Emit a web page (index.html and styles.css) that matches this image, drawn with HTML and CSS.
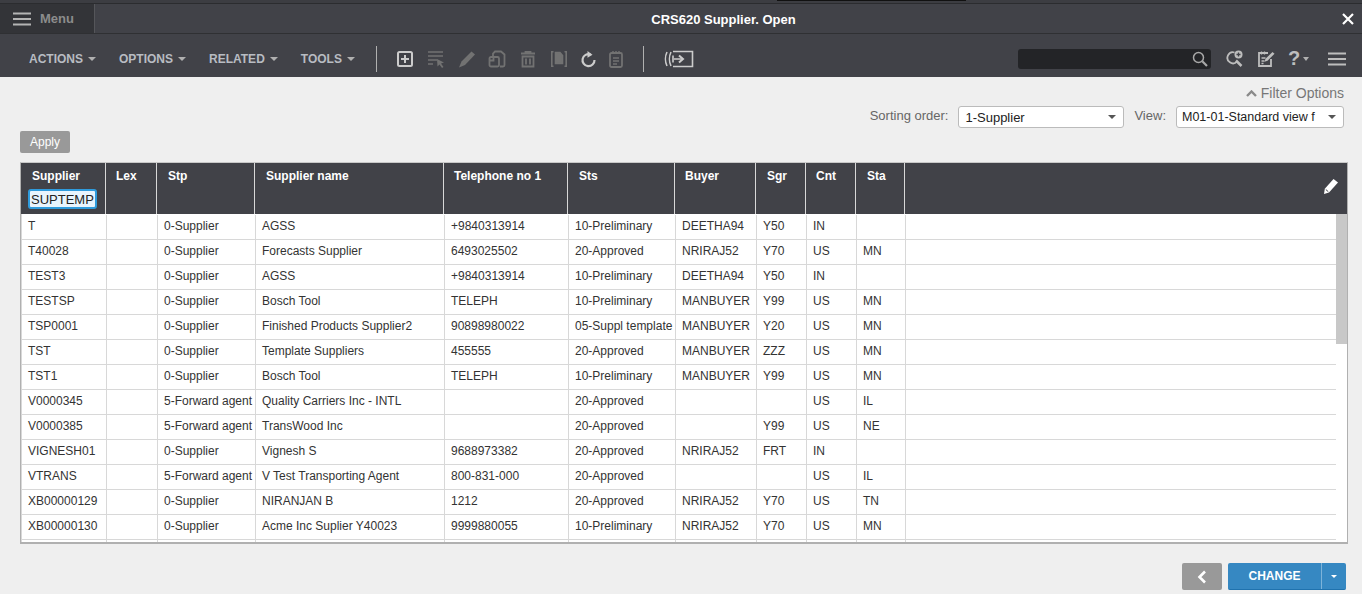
FILE: index.html
```html
<!doctype html>
<html lang="en">
    <head>
        <meta charset="UTF-8" />
        <title>CRS620 Supplier. Open</title>
        <link rel="stylesheet" href="styles.css">
    </head>
    <body>
        <div class="top-strip"><div class="top-mark"></div></div>
        <div class="title-bar">
            <div class="menu-button">
                <svg class="menu-icon" width="18" height="14" viewBox="0 0 18 14"><path d="M0 1.500h18M0 7h18M0 12.500h18" stroke="#b4b4b4" stroke-width="2"/></svg>
                <span>Menu</span>
            </div>
            <div class="title">CRS620 Supplier. Open</div>
            <svg class="close-icon" width="12" height="12" viewBox="0 0 12 12"><path d="M1 1l10 10M11 1L1 11" stroke="#fff" stroke-width="2.200"/></svg>
        </div>

        <div class="toolbar">
            <div class="nav-item">ACTIONS<i class="caret"></i></div>
            <div class="nav-item">OPTIONS<i class="caret"></i></div>
            <div class="nav-item">RELATED<i class="caret"></i></div>
            <div class="nav-item">TOOLS<i class="caret"></i></div>
            <div class="tool-sep"></div>
            <div class="tools">
                <svg width="20" height="20" viewBox="0 0 20 20" fill="none" stroke="#ccc"><rect x="3" y="3" width="14" height="14" rx="1.500" stroke-width="2"/><path d="M6 10h8M10 6v8" stroke-width="2"/></svg>
                <svg width="20" height="20" viewBox="0 0 20 20" fill="none" stroke="#727272"><path d="M2 3h15M2 7h15M2 11h9M2 15h5" stroke-width="1.600"/><path d="M11 10l7 3.500-3 1 2.500 3.500-1.500 1-2.500-3.500-2 2z" fill="#727272" stroke="none"/></svg>
                <svg width="20" height="20" viewBox="0 0 20 20"><path d="M14.500 2.500l3.500 3L8 16l-6 2.500L4.500 12.500z" fill="#727272"/></svg>
                <svg width="20" height="20" viewBox="0 0 20 20" fill="none" stroke="#727272" stroke-width="1.800"><path d="M6 7V4.500L8 2.500h6l3.500 3v10.500c0 1-.5 1.500-1.500 1.500H13"/><rect x="2.500" y="8" width="9.500" height="9.500" rx="1.500"/><path d="M2.500 11.500h4V8"/></svg>
                <svg width="20" height="20" viewBox="0 0 20 20" fill="none" stroke="#727272" stroke-width="1.800"><path d="M3 4.500h14M7.500 4.500V3h5v1.500M4.500 7.500h11v10h-11zM8 9.500v6M12 9.500v6"/></svg>
                <svg width="20" height="20" viewBox="0 0 20 20" fill="none" stroke="#727272" stroke-width="1.600"><path d="M4.500 2.800H2.800v14.400h1.700M15.500 2.800h1.700v14.400h-1.700"/><path d="M6.500 3.500h4.500l2.500 3v8h-7z" fill="#727272"/></svg>
                <svg class="tool-near" width="20" height="20" viewBox="0 0 20 20" fill="none"><path d="M12.500 5.500A6 6 0 1 0 16.500 11" stroke="#ccc" stroke-width="2.200"/><path d="M9.500 2l5 3.800-5 3z" fill="#ccc"/></svg>
                <svg class="tool-nearer" width="20" height="20" viewBox="0 0 20 20" fill="none" stroke="#727272"><rect x="4" y="4" width="12" height="14" rx="1.500" stroke-width="1.800"/><path d="M7 2v3M10 2v3M13 2v3M7 9h6M7 12h6M7 15h4" stroke-width="1.400"/></svg>
            </div>
            <div class="tool-sep tool-sep-second"></div>
            <svg class="switch-icon" width="30" height="18" viewBox="0 0 30 18" fill="none" stroke="#ccc" stroke-width="1.600"><path d="M3 2C1 6 1 12 3 16M7 2C5 6 5 12 7 16"/><path d="M9 1.500h19.500v15H9"/><path d="M9 5.500v7M10 9h8"/><path d="M15 5.500l4 3.500-4 3.500" stroke-width="2"/></svg>

            <div class="search-box">
                <svg width="16" height="16" viewBox="0 0 16 16" fill="none" stroke="#a8a8a8"><circle cx="6.500" cy="6.500" r="5" stroke-width="1.500"/><path d="M10.300 10.300L15 15" stroke-width="2.200"/></svg>
            </div>
            <div class="right-tools">
                <svg width="18" height="18" viewBox="0 0 18 18" fill="none"><path d="M8.500 2.500A5.500 5.500 0 1 0 11 11.500" stroke="#bdbdbd" stroke-width="1.800"/><path d="M10 10.500l5.500 5.500" stroke="#bdbdbd" stroke-width="2.500"/><circle cx="12.500" cy="4.500" r="4" fill="#bdbdbd"/><path d="M12.500 2.500v4M10.500 4.500h4" stroke="#414248" stroke-width="1.300"/></svg>
                <svg width="18" height="18" viewBox="0 0 18 18" fill="none" stroke="#bdbdbd"><path d="M14 9v7H2V3h9" stroke-width="1.800"/><path d="M4.500 1.500v3M7.500 1.500v3M4.500 8h4M4.500 11h3M4.500 13.500h2" stroke-width="1.300"/><path d="M15.500 2l2 1.800-7 7-3 1 1-3z" fill="#bdbdbd" stroke="none"/></svg>
                <span class="help">?<i class="caret"></i></span>
                <svg width="18" height="14" viewBox="0 0 18 14"><path d="M0 1.500h18M0 7h18M0 12.500h18" stroke="#bdbdbd" stroke-width="2"/></svg>
            </div>
        </div>

        <div class="filter-toggle">
            <svg width="11" height="7" viewBox="0 0 11 7"><path d="M1 6l4.500-4.500L10 6" fill="none" stroke="#8a8a8a" stroke-width="2.400"/></svg>
            <span>Filter Options</span>
        </div>

        <div class="filter-row">
            <label>Sorting order:</label>
            <div class="select select-sort">1-Supplier<i class="select-arrow"></i></div>
            <label class="view-label">View:</label>
            <div class="select select-view">M01-01-Standard view f<i class="select-arrow"></i></div>
        </div>

        <div class="apply-row"><button class="apply" type="button">Apply</button></div>

        <div class="grid">
            <table class="grid-head">
                <colgroup>
                    <col class="c1"><col class="c2"><col class="c3"><col class="c4"><col class="c5"><col class="c6"><col class="c7"><col class="c8"><col class="c9"><col class="c10"><col>
                </colgroup>
                <tr>
                    <th>Supplier<input class="filter-input" type="text" value="SUPTEMP"></th>
                    <th class="nudge">Lex</th>
                    <th>Stp</th>
                    <th>Supplier name</th>
                    <th class="nudge">Telephone no 1</th>
                    <th>Sts</th>
                    <th class="nudge">Buyer</th>
                    <th>Sgr</th>
                    <th class="nudge">Cnt</th>
                    <th>Sta</th>
                    <th class="edit-head">
                        <svg width="17" height="17" viewBox="0 0 17 17"><path d="M11.500 1l4.500 3.500-9 10-5 1.500 .8-5.200z" fill="#fff"/><path d="M3.800 11.500l2.500 2.200" stroke="#414248" stroke-width="1"/></svg>
                    </th>
                </tr>
            </table>
            <div class="grid-body">
                <table class="grid-rows">
                    <colgroup>
                        <col class="c1"><col class="c2"><col class="c3"><col class="c4"><col class="c5"><col class="c6"><col class="c7"><col class="c8"><col class="c9"><col class="c10"><col>
                    </colgroup>
                    <tr><td>T</td><td></td><td>0-Supplier</td><td>AGSS</td><td>+9840313914</td><td>10-Preliminary</td><td>DEETHA94</td><td>Y50</td><td>IN</td><td></td><td></td></tr>
                    <tr><td>T40028</td><td></td><td>0-Supplier</td><td>Forecasts Supplier</td><td>6493025502</td><td>20-Approved</td><td>NRIRAJ52</td><td>Y70</td><td>US</td><td>MN</td><td></td></tr>
                    <tr><td>TEST3</td><td></td><td>0-Supplier</td><td>AGSS</td><td>+9840313914</td><td>10-Preliminary</td><td>DEETHA94</td><td>Y50</td><td>IN</td><td></td><td></td></tr>
                    <tr><td>TESTSP</td><td></td><td>0-Supplier</td><td>Bosch Tool</td><td>TELEPH</td><td>10-Preliminary</td><td>MANBUYER</td><td>Y99</td><td>US</td><td>MN</td><td></td></tr>
                    <tr><td>TSP0001</td><td></td><td>0-Supplier</td><td>Finished Products Supplier2</td><td>90898980022</td><td>05-Suppl template</td><td>MANBUYER</td><td>Y20</td><td>US</td><td>MN</td><td></td></tr>
                    <tr><td>TST</td><td></td><td>0-Supplier</td><td>Template Suppliers</td><td>455555</td><td>20-Approved</td><td>MANBUYER</td><td>ZZZ</td><td>US</td><td>MN</td><td></td></tr>
                    <tr><td>TST1</td><td></td><td>0-Supplier</td><td>Bosch Tool</td><td>TELEPH</td><td>10-Preliminary</td><td>MANBUYER</td><td>Y99</td><td>US</td><td>MN</td><td></td></tr>
                    <tr><td>V0000345</td><td></td><td>5-Forward agent</td><td>Quality Carriers Inc - INTL</td><td></td><td>20-Approved</td><td></td><td></td><td>US</td><td>IL</td><td></td></tr>
                    <tr><td>V0000385</td><td></td><td>5-Forward agent</td><td>TransWood Inc</td><td></td><td>20-Approved</td><td></td><td>Y99</td><td>US</td><td>NE</td><td></td></tr>
                    <tr><td>VIGNESH01</td><td></td><td>0-Supplier</td><td>Vignesh S</td><td>9688973382</td><td>20-Approved</td><td>NRIRAJ52</td><td>FRT</td><td>IN</td><td></td><td></td></tr>
                    <tr><td>VTRANS</td><td></td><td>5-Forward agent</td><td>V Test Transporting Agent</td><td>800-831-000</td><td>20-Approved</td><td></td><td></td><td>US</td><td>IL</td><td></td></tr>
                    <tr><td>XB00000129</td><td></td><td>0-Supplier</td><td>NIRANJAN B</td><td>1212</td><td>20-Approved</td><td>NRIRAJ52</td><td>Y70</td><td>US</td><td>TN</td><td></td></tr>
                    <tr><td>XB00000130</td><td></td><td>0-Supplier</td><td>Acme Inc Suplier Y40023</td><td>9999880055</td><td>10-Preliminary</td><td>NRIRAJ52</td><td>Y70</td><td>US</td><td>MN</td><td></td></tr>
                    <tr><td></td><td></td><td></td><td></td><td></td><td></td><td></td><td></td><td></td><td></td><td></td></tr>
                </table>
                <div class="scroll-thumb"></div>
            </div>
        </div>

        <div class="footer">
            <button class="back" type="button">
                <svg width="10" height="14" viewBox="0 0 10 14"><path d="M8 1.500L2.500 7 8 12.500" fill="none" stroke="#fff" stroke-width="2.600"/></svg>
            </button>
            <div class="change">
                <span class="change-label">CHANGE</span>
                <span class="change-more"><i class="caret caret-white"></i></span>
            </div>
        </div>
    </body>
</html>
```

FILE: styles.css
```css
* {
    box-sizing: border-box;
}
html, body {
    margin: 0;
    height: 594px;
    overflow: hidden;
}
body {
    font-family: "Liberation Sans", Arial, sans-serif;
    font-size: 12px;
    color: #333;
    background-color: #efefef;
}

/* top bars */
.top-strip {
    height: 4px;
    background-color: #3c3d42;
    border-bottom: 1px solid #2b2c2f;
}
.top-mark {
    width: 189px;
    height: 1px;
    margin-left: 777px;
    background-color: #111;
}
.title-bar {
    display: flex;
    align-items: center;
    height: 30px;
    background-color: #414248;
    border-bottom: 1px solid #2f3033;
}
.menu-button {
    display: flex;
    align-items: center;
    gap: 9px;
    width: 95px;
    height: 29px;
    padding-left: 13px;
    font-size: 13px;
    font-weight: bold;
    color: #8c8c8c;
    background-color: #333438;
    border-right: 1px solid #55565a;
}
.title {
    flex: 1;
    padding-top: 1px;
    padding-left: 10px;
    text-align: center;
    font-size: 13px;
    font-weight: bold;
    color: #fff;
}
.close-icon {
    margin-top: 1px;
    margin-right: 8px;
}
.toolbar {
    display: flex;
    align-items: center;
    height: 43px;
    padding-top: 6px;
    padding-left: 29px;
    background-color: #414248;
}
.nav-item {
    display: flex;
    align-items: center;
    margin-right: 23px;
    font-size: 12px;
    font-weight: bold;
    color: #b8bcc2;
}
.caret {
    display: inline-block;
    width: 0;
    height: 0;
    margin-left: 5px;
    border-left: 4px solid transparent;
    border-right: 4px solid transparent;
    border-top: 4px solid #b0b0b0;
}
.tool-sep {
    width: 1px;
    height: 26px;
    margin-left: -2px;
    background-color: #b0b0b0;
}
.tool-sep-second {
    margin-left: 17px;
}
.tools {
    display: flex;
    gap: 10.800px;
    margin-left: 18px;
}
.tool-near {
    margin-left: -2px;
}
.tool-nearer {
    margin-left: -3px;
}
.switch-icon {
    margin-left: 20px;
}
.search-box {
    display: flex;
    align-items: center;
    justify-content: flex-end;
    width: 193px;
    height: 20px;
    margin-left: auto;
    padding-right: 3px;
    background-color: #232427;
    border-radius: 3px;
}
.right-tools {
    display: flex;
    align-items: center;
    width: 151px;
    padding-left: 15px;
    gap: 13px;
}
.help {
    display: flex;
    align-items: center;
    width: 27px;
    font-size: 20px;
    font-weight: bold;
    color: #bdbdbd;
}
.help .caret {
    margin-left: 3px;
    border-left-width: 3.500px;
    border-right-width: 3.500px;
}

/* filter area */
.filter-toggle {
    display: flex;
    align-items: center;
    justify-content: flex-end;
    gap: 4px;
    height: 16px;
    margin-top: 8px;
    padding-right: 18px;
    font-size: 14px;
    color: #777;
}
.filter-row {
    display: flex;
    align-items: center;
    justify-content: flex-end;
    height: 22px;
    margin-top: 5px;
    padding-right: 18px;
}
.filter-row label {
    margin-right: 10px;
    margin-top: -3px;
    font-size: 13px;
    color: #666;
}
.filter-row .view-label {
    margin-left: 10px;
}
.select {
    position: relative;
    height: 22px;
    padding: 3px 6px;
    font-size: 13px;
    white-space: nowrap;
    color: #222;
    background-color: #fff;
    border: 1px solid #bbb;
    border-radius: 3px;
}
.select-sort {
    width: 166px;
}
.select-view {
    width: 168px;
    padding-left: 5px;
    font-size: 12.500px;
}
.select-arrow {
    position: absolute;
    right: 7px;
    top: 8px;
    width: 0;
    height: 0;
    border-left: 4px solid transparent;
    border-right: 4px solid transparent;
    border-top: 4px solid #555;
}
.apply-row {
    margin-top: 3px;
    padding-left: 20px;
}
.apply {
    display: block;
    width: 50px;
    height: 22px;
    padding: 0;
    font-family: inherit;
    font-size: 12px;
    color: #fff;
    background-color: #999;
    border: none;
    border-radius: 2px;
}

/* grid */
.grid {
    width: 1328px;
    height: 382px;
    margin-top: 9px;
    margin-left: 20px;
    background-color: #fff;
    border: 1px solid #b0b0b0;
    border-top-color: #c8c8c8;
    border-bottom-width: 2px;
    overflow: hidden;
}
.grid table {
    border-collapse: separate;
    border-spacing: 0;
    table-layout: fixed;
    width: 1326px;
}
.c1 { width: 85px; }
.c2 { width: 51px; }
.c3 { width: 98px; }
.c4 { width: 189px; }
.c5 { width: 124px; }
.c6 { width: 107px; }
.c7 { width: 81px; }
.c8 { width: 50px; }
.c9 { width: 50px; }
.c10 { width: 49px; }
.grid-head th {
    height: 51px;
    padding: 6px 0 0 11px;
    vertical-align: top;
    text-align: left;
    font-size: 12px;
    color: #fff;
    background-color: #414248;
    border-right: 1px solid #d8d8d8;
}
.grid-head th.nudge {
    padding-left: 10px;
}
.grid-head th:last-child {
    border-right: none;
}
.filter-input {
    display: block;
    width: 69px;
    height: 20px;
    margin: 6px 0 0 -4px;
    padding: 0 1px;
    font-family: inherit;
    font-size: 13px;
    color: #222;
    background-color: #e8f4fd;
    border: 2px solid #2f9bdc;
    border-radius: 3px;
    outline: none;
}
.grid-head .edit-head {
    padding: 15px 8px 0 0;
    text-align: right;
}
.grid-body {
    position: relative;
    height: 328px;
    padding-top: 1px;
    overflow: hidden;
    border-left: 1px solid #d8d8d8;
}
.grid-rows td {
    height: 25px;
    padding: 0 0 2px 6px;
    font-size: 12px;
    white-space: nowrap;
    overflow: hidden;
    color: #333;
    border-right: 1px solid #d8d8d8;
    border-bottom: 1px solid #d8d8d8;
}
.grid-rows td:last-child {
    border-right: none;
}
.scroll-thumb {
    position: absolute;
    top: 0;
    right: 0;
    width: 11px;
    height: 130px;
    background-color: #c8c8c8;
}
.grid-body::after {
    content: "";
    position: absolute;
    top: 130px;
    right: 0;
    bottom: 0;
    width: 11px;
    background-color: #fff;
}

/* footer */
.footer {
    display: flex;
    justify-content: flex-end;
    gap: 6px;
    margin-top: 19px;
    padding-right: 16px;
}
.back {
    display: flex;
    align-items: center;
    justify-content: center;
    width: 40px;
    height: 27px;
    padding: 0;
    background-color: #999;
    border: none;
    border-radius: 2px;
}
.change {
    display: flex;
    width: 118px;
    height: 27px;
    color: #fff;
    background-color: #3688c2;
    border-bottom: 1px solid #1f72ae;
    border-radius: 2px;
}
.change-label {
    display: flex;
    align-items: center;
    justify-content: center;
    width: 93px;
    font-size: 12px;
    font-weight: bold;
}
.change-more {
    display: flex;
    align-items: center;
    justify-content: center;
    flex: 1;
    border-left: 1px solid #7db3d9;
}
.caret-white {
    margin: 0;
    border-top-color: #fff;
    border-left-width: 3px;
    border-right-width: 3px;
    border-top-width: 3px;
}
```
